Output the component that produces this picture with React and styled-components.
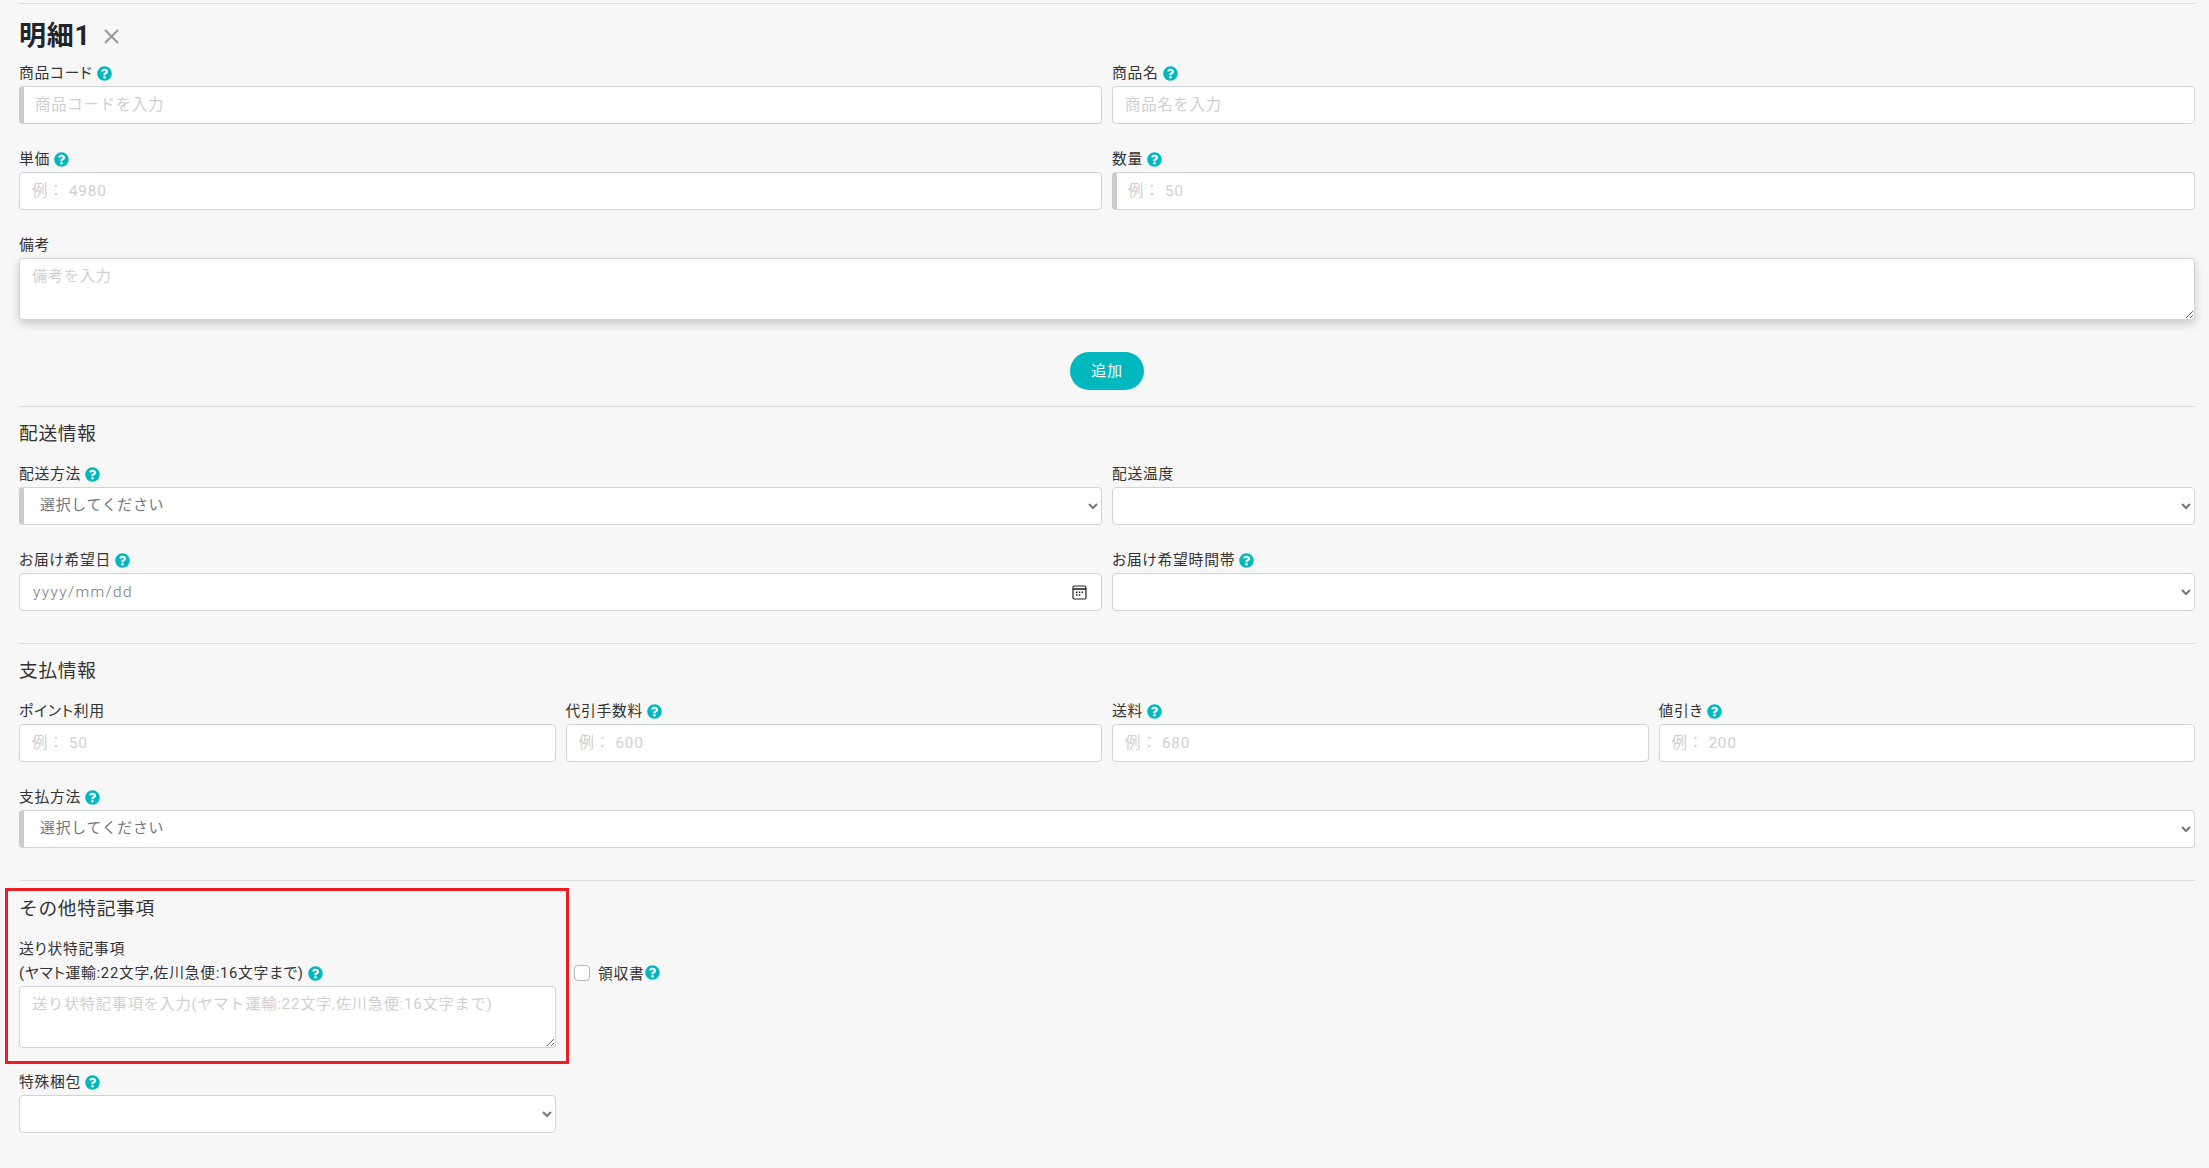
import React from "react";
import styled, { createGlobalStyle } from "styled-components";
import { FaQuestionCircle } from "react-icons/fa";

const GlobalStyle = createGlobalStyle`
	html, body {
		margin: 0;
		padding: 0;
		background: #f7f7f7;
	}
	body {
		font-family: Roboto, "Noto Sans CJK JP", sans-serif;
		font-size: 14.4px;
		letter-spacing: 0.05em;
		color: #212529;
	}
`;

const Page = styled.div`
	box-sizing: border-box;
	width: 2209px;
	height: 1168px;
	padding: 3px 14px 0 19px;
	overflow: hidden;
`;

const Rule = styled.hr`
	margin: 0;
	border: 0;
	border-top: 1px solid #dcdcdc;
`;

const TitleRow = styled.div`
	display: flex;
	align-items: center;
	height: 39px;
	margin: 13px 0 6px;
`;

const Title = styled.h2`
	margin: 0;
	font-size: 27px;
	font-weight: 700;
	line-height: 39px;
	color: #212529;
`;

const CloseButton = styled.button`
	display: flex;
	margin-left: 12px;
	padding: 0;
	border: 0;
	background: none;
	color: #999;
`;

const Grid = styled.div`
	display: grid;
	grid-template-columns: repeat(${(p) => p.$cols || 2}, 1fr);
	column-gap: 10px;
`;

const Field = styled.div`
	margin-bottom: ${(p) => p.$mb ?? 24}px;
	min-width: 0;
`;

const Label = styled.label`
	box-sizing: border-box;
	display: flex;
	align-items: center;
	gap: 4px;
	height: 24px;
	padding-bottom: 2px;
	font-size: 14.8px;
	font-feature-settings: "palt";
	line-height: 24px;
	color: #333;
	white-space: nowrap;
`;

const Help = styled(FaQuestionCircle)`
	flex: none;
	width: 15px;
	height: 15px;
	color: #00b8bd;
`;

const controlStyle = `
	display: block;
	box-sizing: border-box;
	width: 100%;
	background: #fff;
	border: 1px solid #ced4da;
	border-radius: 4px;
	font-family: Roboto, "Noto Sans CJK JP", sans-serif;
	font-size: 15.4px;
	letter-spacing: 0.05em;
	color: #6f767d;
	outline: none;
	&::placeholder {
		color: #cfcfcf;
		opacity: 1;
	}
`;

const Input = styled.input`
	${controlStyle}
	height: 38px;
	padding: 6px 12px 7px;
	border-left: ${(p) => (p.$required ? "5px solid #ccc" : "1px solid #ced4da")};
	padding-left: ${(p) => (p.$required ? "11px" : "12px")};
`;

const DateInput = styled(Input)`
	padding-left: 13px;
	letter-spacing: 1.4px;
	font-weight: 300;
`;

const Select = styled.select`
	${controlStyle}
	height: 38px;
	padding: 5px 12px 7px;
	font-size: 14.9px;
	border-left: ${(p) => (p.$required ? "5px solid #ccc" : "1px solid #ced4da")};
`;

const TextArea = styled.textarea`
	${controlStyle}
	height: 62px;
	padding: 4px 12px;
	font-size: 15.2px;
	box-shadow: ${(p) => (p.$raised ? "0 4px 10px rgba(0, 0, 0, 0.18)" : "none")};
`;

const DateBox = styled.div`
	position: relative;
`;

const CalendarIcon = styled.svg`
	position: absolute;
	top: 12px;
	right: 15px;
	width: 15px;
	height: 15px;
`;

const ButtonRow = styled.div`
	display: flex;
	justify-content: center;
	margin: 32px 0 16px;
`;

const AddButton = styled.button`
	width: 74px;
	height: 38px;
	padding: 0 0 4px;
	border: 0;
	border-radius: 19px;
	background: #00b8bd;
	color: #fff;
	font-family: inherit;
	font-size: 15px;
	letter-spacing: 0.05em;
`;

const SectionTitle = styled.h3`
	margin: 13px 0 14px;
	font-size: 18.7px;
	font-weight: 400;
	line-height: 29px;
	color: #333;
`;

const NotesRow = styled.div`
	display: flex;
	align-items: flex-start;
	margin: 7px 0 0 -14px;
`;

const RedBox = styled.div`
	box-sizing: border-box;
	width: 564px;
	height: 176px;
	padding: 3px 10.5px 0 11px;
	border: 3px solid #ed1c24;
`;

const NotesTitle = styled(SectionTitle)`
	margin: 1px 0 14px;
`;

const CheckLabel = styled.label`
	display: flex;
	align-items: center;
	height: 24px;
	margin: 72px 0 0 5px;
	font-size: 14.8px;
	font-feature-settings: "palt";
	color: #333;
`;

const Check = styled.input`
	box-sizing: border-box;
	appearance: none;
	width: 16px;
	height: 16px;
	margin: 1px 8px 0 0;
	background: #fff;
	border: 1px solid #adb5bd;
	border-radius: 4px;
`;

const SpecialField = styled.div`
	width: 536.5px;
	margin-top: 7px;
`;

const Calendar = () => (
	<CalendarIcon viewBox="0 0 15 15" fill="none" stroke="#222" strokeWidth="1.2">
		<rect x="1" y="1" width="13" height="13" rx="1.5" />
		<line x1="1" y1="4" x2="14" y2="4" strokeWidth="1.6" />
		<g fill="#222" stroke="none">
			<rect x="4" y="6.5" width="1.5" height="1.5" />
			<rect x="6.8" y="6.5" width="1.5" height="1.5" />
			<rect x="9.6" y="6.5" width="1.5" height="1.5" />
			<rect x="4" y="9.2" width="1.5" height="1.5" />
			<rect x="6.8" y="9.2" width="1.5" height="1.5" />
		</g>
	</CalendarIcon>
);

const App = () => (
	<Page>
		<GlobalStyle />
		<Rule />
		<TitleRow>
			<Title>明細1</Title>
			<CloseButton>
				<svg width="17" height="17" viewBox="0 0 17 17" stroke="currentColor" strokeWidth="2">
					<line x1="2" y1="2" x2="15" y2="15" />
					<line x1="15" y1="2" x2="2" y2="15" />
				</svg>
			</CloseButton>
		</TitleRow>
		<Grid>
			<Field>
				<Label>商品コード<Help /></Label>
				<Input $required placeholder="商品コードを入力" />
			</Field>
			<Field>
				<Label>商品名<Help /></Label>
				<Input placeholder="商品名を入力" />
			</Field>
			<Field>
				<Label>単価<Help /></Label>
				<Input placeholder="例： 4980" />
			</Field>
			<Field>
				<Label>数量<Help /></Label>
				<Input $required placeholder="例： 50" />
			</Field>
		</Grid>
		<Field $mb={0}>
			<Label>備考</Label>
			<TextArea $raised placeholder="備考を入力" />
		</Field>
		<ButtonRow>
			<AddButton>追加</AddButton>
		</ButtonRow>
		<Rule />
		<SectionTitle>配送情報</SectionTitle>
		<Grid>
			<Field>
				<Label>配送方法<Help /></Label>
				<Select $required>
					<option>選択してください</option>
				</Select>
			</Field>
			<Field>
				<Label>配送温度</Label>
				<Select>
					<option></option>
				</Select>
			</Field>
			<Field $mb={32}>
				<Label>お届け希望日<Help /></Label>
				<DateBox>
					<DateInput defaultValue="yyyy/mm/dd" />
					<Calendar />
				</DateBox>
			</Field>
			<Field $mb={32}>
				<Label>お届け希望時間帯<Help /></Label>
				<Select>
					<option></option>
				</Select>
			</Field>
		</Grid>
		<Rule />
		<SectionTitle>支払情報</SectionTitle>
		<Grid $cols={4}>
			<Field>
				<Label>ポイント利用</Label>
				<Input placeholder="例： 50" />
			</Field>
			<Field>
				<Label>代引手数料<Help /></Label>
				<Input placeholder="例： 600" />
			</Field>
			<Field>
				<Label>送料<Help /></Label>
				<Input placeholder="例： 680" />
			</Field>
			<Field>
				<Label>値引き<Help /></Label>
				<Input placeholder="例： 200" />
			</Field>
		</Grid>
		<Field $mb={32}>
			<Label>支払方法<Help /></Label>
			<Select $required>
				<option>選択してください</option>
			</Select>
		</Field>
		<Rule />
		<NotesRow>
			<RedBox>
				<NotesTitle>その他特記事項</NotesTitle>
				<Label>送り状特記事項</Label>
				<Label>(ヤマト運輸:22文字,佐川急便:16文字まで)<Help /></Label>
				<TextArea placeholder="送り状特記事項を入力(ヤマト運輸:22文字,佐川急便:16文字まで)" />
			</RedBox>
			<CheckLabel>
				<Check type="checkbox" />
				領収書
				<Help />
			</CheckLabel>
		</NotesRow>
		<SpecialField>
			<Label>特殊梱包<Help /></Label>
			<Select>
				<option></option>
			</Select>
		</SpecialField>
	</Page>
);

export default App;
